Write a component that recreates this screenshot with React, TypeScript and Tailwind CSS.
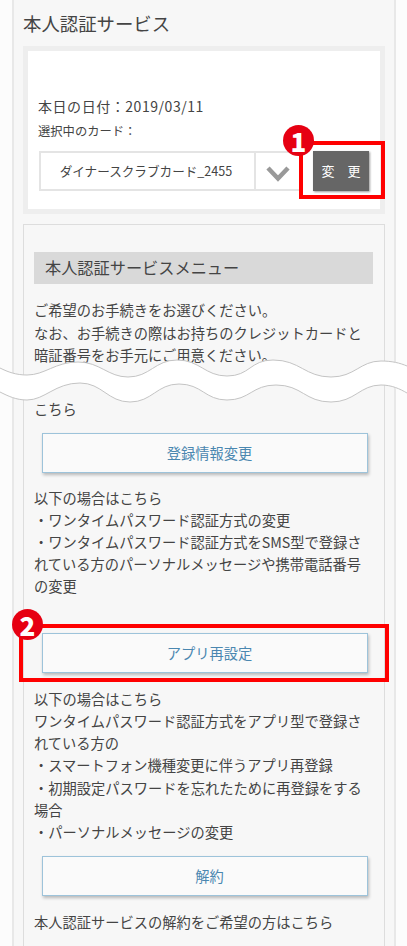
import React from "react";

const topEdge = "M0 368 C8 372 16 375 27 375 C45 375 55 362 78 362 C100 362 108 377 128 377 C150 377 155 360 177 360 C200 360 205 376 227 376 C250 376 250 360 273 360 C300 360 305 377 331 377 C355 377 360 361 381 361 C392 361 400 363 407 366";
const bottomEdge = "M0 392 C8 396 16 400 27 400 C45 400 55 383 80 383 C102 383 108 402 130 402 C152 402 157 384 179 384 C202 384 205 400 227 400 C250 400 252 385 276 385 C302 385 305 402 331 402 C355 402 360 385 381 385 C392 385 400 389 407 393";
const bandFill = "M0 368 C8 372 16 375 27 375 C45 375 55 362 78 362 C100 362 108 377 128 377 C150 377 155 360 177 360 C200 360 205 376 227 376 C250 376 250 360 273 360 C300 360 305 377 331 377 C355 377 360 361 381 361 C392 361 400 363 407 366 L407 393 C400 389 392 385 381 385 C360 385 355 402 331 402 C305 402 302 385 276 385 C252 385 250 400 227 400 C205 400 202 384 179 384 C157 384 152 402 130 402 C108 402 102 383 80 383 C55 383 45 400 27 400 C16 400 8 396 0 392 Z";

const Wave = () => (
    <svg className="absolute left-0 top-[350px]" width="407" height="60" viewBox="0 350 407 60">
        <path d={bandFill} fill="#ffffff" />
        <path d={topEdge} fill="none" stroke="#c4c4c4" strokeWidth="1" />
        <path d={bottomEdge} fill="none" stroke="#c4c4c4" strokeWidth="1" />
    </svg>
);

const NumberBadge: React.FC<{ n: string; className: string }> = ({ n, className }) => (
    <div className={`absolute w-[31px] h-[31px] rounded-full bg-[#e60012] text-white flex items-center justify-center text-[26px] font-black ${className}`}>{n}</div>
);

const MenuButton: React.FC<{ label: string; className?: string }> = ({ label, className = "" }) => (
    <div className={`ml-[8px] w-[326px] h-[40px] pl-[9px] bg-[#fafafa] border border-[#9dc3da] shadow-[1px_2px_3px_rgba(0,0,0,0.25)] flex items-center justify-center text-[14.25px] text-[#4a87b0] ${className}`}>{label}</div>
);

export default function App() {
    return (
        <div className="relative w-[407px] h-[946px] overflow-hidden bg-[#fcfcfc] text-[#444] font-['Noto_Sans_CJK_JP','Liberation_Sans',sans-serif]">
            <div className="ml-[12px] w-[384px] h-[946px] bg-[#f7f7f7] border-x-2 border-[#e8e8e8] px-[9px]">
                <h1 className="pt-[10px] h-[46px] text-[18.4px] leading-[26px] font-normal">本人認証サービス</h1>
                <div className="w-[362px] h-[168px] bg-white border-[5px] border-[#eeeeee] pl-[10px] pt-[45px]">
                    <p className="text-[14px] leading-[20px] tracking-[0.55px] whitespace-nowrap">本日の日付：2019/03/11</p>
                    <p className="mt-[6px] text-[12.3px] leading-[18px]">選択中のカード：</p>
                    <div className="flex mt-[11px]">
                        <div className="ml-[1px] w-[215px] h-[40px] pr-[3px] border-2 border-r-0 border-[#e4e4e4] flex items-center justify-center text-[12.6px]">ダイナースクラブカード_2455</div>
                        <div className="w-[46px] h-[40px] border-y-2 border-l-2 border-[#e4e4e4] flex items-center justify-center">
                            <svg className="mt-[5px]" width="26" height="18" viewBox="0 0 26 18"><path d="M3 3 L13 13.5 L23 3" fill="none" stroke="#999" strokeWidth="4.5" /></svg>
                        </div>
                        <div className="ml-[13px] w-[56px] h-[40px] bg-[#666] shadow-[1px_1px_2px_rgba(0,0,0,0.4)] flex items-center justify-center text-[13px] text-white gap-[13px]"><span>変</span><span>更</span></div>
                    </div>
                </div>
                <div className="mt-[10px] w-[362px] h-[730px] border border-[#dddddd] px-[10px] pt-[27px]">
                    <h2 className="w-[339px] h-[32px] bg-[#d9d9d9] pl-[11px] text-[16.2px] leading-[30px] font-normal">本人認証サービスメニュー</h2>
                    <div className="mt-[15px] text-[14.25px] leading-[22.5px] whitespace-nowrap">
                        <p>ご希望のお手続きをお選びください。</p>
                        <p>なお、お手続きの際はお持ちのクレジットカードと</p>
                        <p>暗証番号をお手元にご用意ください。</p>
                    </div>
                    <p className="mt-[31px] text-[14.25px] leading-[22px]">こちら</p>
                    <MenuButton label="登録情報変更" className="mt-[13px]" />
                    <div className="mt-[14px] text-[14.25px] leading-[22px] whitespace-nowrap">
                        <p>以下の場合はこちら</p>
                        <p>・ワンタイムパスワード認証方式の変更</p>
                        <p>・ワンタイムパスワード認証方式をSMS型で登録さ</p>
                        <p>れている方のパーソナルメッセージや携帯電話番号</p>
                        <p>の変更</p>
                    </div>
                    <MenuButton label="アプリ再設定" className="mt-[36px]" />
                    <div className="mt-[15px] text-[14.25px] leading-[22.3px] whitespace-nowrap">
                        <p>以下の場合はこちら</p>
                        <p>ワンタイムパスワード認証方式をアプリ型で登録さ</p>
                        <p>れている方の</p>
                        <p>・スマートフォン機種変更に伴うアプリ再登録</p>
                        <p>・初期設定パスワードを忘れたために再登録をする</p>
                        <p>場合</p>
                        <p>・パーソナルメッセージの変更</p>
                    </div>
                    <MenuButton label="解約" className="mt-[12px]" />
                    <p className="mt-[15px] text-[14.25px] leading-[22px] whitespace-nowrap">本人認証サービスの解約をご希望の方はこちら</p>
                </div>
            </div>
            <Wave />
            <div className="absolute left-[299px] top-[141px] w-[86px] h-[58px] border-[4px] border-[#ff0000]" />
            <NumberBadge n="1" className="left-[283px] top-[125px]" />
            <div className="absolute left-[19px] top-[624px] w-[370px] h-[58px] border-[4px] border-[#ff0000]" />
            <NumberBadge n="2" className="left-[12px] top-[609px]" />
        </div>
    );
}
